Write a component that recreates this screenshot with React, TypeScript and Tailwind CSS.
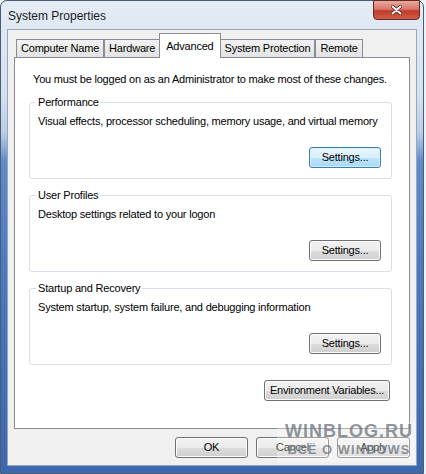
import React from 'react';

const font = { fontFamily: '"Liberation Sans", Arial, sans-serif' };

const Btn: React.FC<{ label: string; w: string; focused?: boolean }> = ({ label, w, focused }) => (
  <button
    className={
      'h-[21px] whitespace-nowrap rounded-[3px] border text-[11px] tracking-[-0.2px] text-black leading-none ' +
      w +
      (focused
        ? ' border-[#3c7fb1] bg-[linear-gradient(#eaf6fd_0%,#d9f0fc_50%,#bee6fd_51%,#a7d9f5_100%)] shadow-[inset_0_0_0_1px_#d6eefb]'
        : ' border-[#707070] bg-[linear-gradient(#f2f2f2_0%,#ebebeb_50%,#dddddd_51%,#cfcfcf_100%)] shadow-[inset_0_0_0_1px_#fcfcfc]')
    }
  >
    {label}
  </button>
);

const Group: React.FC<{ title: string; desc: string; focused?: boolean }> = ({ title, desc, focused }) => (
  <div className="relative h-[77px] rounded-[3px] border border-[#d5dfe5] pl-[8px] pr-[10px] pt-[11px]">
    <span className="absolute left-[6px] top-[-8px] whitespace-nowrap bg-white px-[2px] text-[11px] leading-[14px] tracking-[-0.2px]">{title}</span>
    <div className="whitespace-nowrap text-[11px] leading-[14px] tracking-[-0.2px]">{desc}</div>
    <div className="mt-[19px] flex justify-end">
      <Btn label="Settings..." w="w-[72px]" focused={focused} />
    </div>
  </div>
);

const tabs = ['Computer Name', 'Hardware', 'Advanced', 'System Protection', 'Remote'];

export default function App() {
  return (
    <div className="h-[474px] w-[426px] bg-[#eef1f5]" style={font}>
      <div className="relative flex h-[474px] w-[424px] flex-col rounded-t-[7px] border border-[#4b5b70] bg-[linear-gradient(180deg,#e4ecf5_0%,#d3e0ee_20%,#b9cde6_28%,#5f8bcb_34%,#4a77bd_60%,#3d68b0_100%)] px-[6px] pb-[7px]">
        <div className="flex h-[28px] items-start justify-between">
          <span className="whitespace-nowrap pl-[1px] pt-[6px] text-[12px] text-[#1a1a1a]">System Properties</span>
          <div className="mr-[-3px] mt-[-1px] flex h-[20px] w-[47px] items-center justify-center rounded-b-[4px] border border-[#5c2b25] bg-[linear-gradient(#e9a89d_0%,#d7786b_45%,#c2392a_55%,#cf5f45_100%)]">
            <svg width="11" height="10" viewBox="0 0 11 10">
              <path d="M1.5 1.5 L9.5 8.5 M9.5 1.5 L1.5 8.5" stroke="#4a1a14" strokeWidth="3.4" strokeLinecap="round" />
              <path d="M1.5 1.5 L9.5 8.5 M9.5 1.5 L1.5 8.5" stroke="#ffffff" strokeWidth="2" strokeLinecap="round" />
            </svg>
          </div>
        </div>
        <div className="flex flex-1 flex-col border border-[#98a9bf] bg-[#f0f0f0] px-[6px] pt-[2px]">
          <div className="relative z-10 flex h-[25px] items-end pl-[2px]">
            {tabs.map((t) =>
              t === 'Advanced' ? (
                <div key={t} className="mx-[-1px] -mb-px flex h-[25px] items-start whitespace-nowrap border border-b-0 border-[#898c95] bg-white px-[6px] pt-[4px] text-[11px] tracking-[-0.2px]">
                  {t}
                </div>
              ) : (
                <div key={t} className="flex h-[18px] items-center whitespace-nowrap border border-b-0 border-[#898c95] bg-[linear-gradient(#f2f2f2,#e3e3e3)] px-[4px] text-[11px] tracking-[-0.2px]">
                  {t}
                </div>
              )
            )}
          </div>
          <div className="flex h-[372px] flex-col border border-[#898c95] bg-white pl-[14px] pr-[17px] pt-[14px]">
            <div className="whitespace-nowrap pl-[4px] text-[11px] leading-[14px] tracking-[-0.2px]">You must be logged on as an Administrator to make most of these changes.</div>
            <div className="mt-[16px] flex flex-col gap-[16px]">
              <Group title="Performance" desc="Visual effects, processor scheduling, memory usage, and virtual memory" focused />
              <Group title="User Profiles" desc="Desktop settings related to your logon" />
              <Group title="Startup and Recovery" desc="System startup, system failure, and debugging information" />
            </div>
            <div className="mt-[15px] flex justify-end pr-[2px]">
              <Btn label="Environment Variables..." w="w-[126px]" />
            </div>
          </div>
          <div className="mt-[8px] flex justify-end gap-[8px]">
            <Btn label="OK" w="w-[73px]" />
            <Btn label="Cancel" w="w-[73px]" />
            <Btn label="Apply" w="w-[73px]" />
          </div>
        </div>
        <div className="pointer-events-none absolute left-[276px] top-[421px] flex h-[40px] w-[138px] flex-col items-center bg-white/30 pl-[6px] leading-none">
          <span className="text-[18px] font-bold tracking-[1px] text-[#6d737b]/75">WINBLOG.RU</span>
          <span className="mt-[3px] text-[13px] font-bold tracking-[1px] text-[#6d737b]/75">ВСЁ О WINDOWS</span>
        </div>
      </div>
    </div>
  );
}
